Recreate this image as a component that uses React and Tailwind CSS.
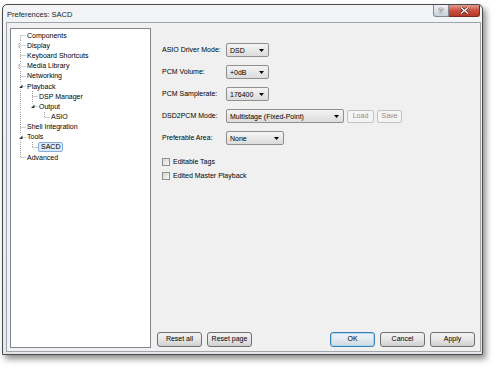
import React from "react";

const treeRows = [
  { label: "Components", level: 0, first: true },
  { label: "Display", level: 0, exp: "closed" },
  { label: "Keyboard Shortcuts", level: 0 },
  { label: "Media Library", level: 0, exp: "closed" },
  { label: "Networking", level: 0 },
  { label: "Playback", level: 0, exp: "open" },
  { label: "DSP Manager", level: 1, cont: [true] },
  { label: "Output", level: 1, cont: [true], exp: "open", last: true },
  { label: "ASIO", level: 2, cont: [true, false], last: true },
  { label: "Shell Integration", level: 0 },
  { label: "Tools", level: 0, exp: "open" },
  { label: "SACD", level: 1, cont: [true], last: true, selected: true },
  { label: "Advanced", level: 0, last: true },
];

const ROW_H = 10.2;
const CELL = 12;

// dotted connector lines + expander for one tree row
const TreeGutter = ({ row }) => {
  const w = CELL * (row.level + 1);
  const mid = Math.floor(ROW_H / 2) + 0.5;
  const cx = CELL * row.level + 6.5;
  const cont = row.cont || [];
  return (
    <svg width={w} height={ROW_H} className="shrink-0 block">
      {cont.map((c, i) =>
        c ? (
          <line key={i} x1={CELL * i + 6.5} y1="0" x2={CELL * i + 6.5} y2={ROW_H}
            stroke="#a0a0a0" strokeDasharray="1 1" />
        ) : null
      )}
      <line x1={cx} y1={row.first ? mid : 0} x2={cx} y2={row.last ? mid : ROW_H}
        stroke="#a0a0a0" strokeDasharray="1 1" />
      <line x1={cx} y1={mid} x2={w} y2={mid} stroke="#a0a0a0" strokeDasharray="1 1" />
      {row.exp === "closed" && (
        <g>
          <rect x={cx - 2} y={mid - 3} width="4" height="6" fill="#fff" />
          <path d={`M${cx - 1.5} ${mid - 2.5} L${cx + 1} ${mid} L${cx - 1.5} ${mid + 2.5} Z`}
            fill="#fff" stroke="#9a9a9a" strokeWidth="0.7" />
        </g>
      )}
      {row.exp === "open" && (
        <g>
          <rect x={cx - 2.5} y={mid - 3} width="5" height="6" fill="#fff" />
          <path d={`M${cx + 2} ${mid - 2} L${cx + 2} ${mid + 1.5} L${cx - 1.5} ${mid + 1.5} Z`}
            fill="#333" />
        </g>
      )}
    </svg>
  );
};

const Select = ({ value, w }) => (
  <div className={`${w} h-[14px] flex items-center justify-between rounded-[2px] border border-[#8e8f8f] bg-linear-to-b from-[#f4f4f4] to-[#dcdcdc] pl-[3px] pr-[4px]`}>
    <span className="leading-none">{value}</span>
    <svg width="5" height="3" className="block">
      <path d="M0 0 L5 0 L2.5 3 Z" fill="#000" />
    </svg>
  </div>
);

const Row = ({ label, children }) => (
  <div className="flex items-center h-[14px]">
    <div className="w-[64px]">{label}</div>
    {children}
  </div>
);

const DisabledBtn = ({ children, w }) => (
  <div className={`${w} h-[13px] flex items-center justify-center rounded-[2px] border border-[#c0c3c6] bg-[#f4f4f4] text-[#8d8d8d]`}>
    {children}
  </div>
);

const Check = ({ label }) => (
  <div className="flex items-center h-[12px]">
    <div className="w-[8px] h-[8px] border border-[#8e8f8f] bg-linear-to-br from-[#d8d8d8] to-[#f7f7f7]" />
    <span className="ml-[3px]">{label}</span>
  </div>
);

const Button = ({ children, focused }) => (
  <div
    className={`w-[45px] h-[15px] flex items-center justify-center rounded-[3px] border ${
      focused
        ? "border-[#3c7fb1] bg-linear-to-b from-[#eef4f8] via-[#e2eaf0] to-[#cfd8df] shadow-[inset_0_0_0_1px_#a8d8f0]"
        : "border-[#707070] bg-linear-to-b from-[#f2f2f2] via-[#e6e6e6] to-[#cfcfcf]"
    }`}
  >
    {children}
  </div>
);

export default function App() {
  return (
    <div className="w-[497px] h-[369px] bg-white overflow-hidden pt-[4px] pl-[2px] font-['Liberation_Sans',Arial,sans-serif] text-[7px] text-black">
      <div className="w-[481px] h-[351px] flex flex-col rounded-t-[5px] border border-[#4a4a4a] bg-linear-to-b from-[#f2f4f6] to-[#e4e8ec] shadow-[3px_4px_6px_rgba(0,0,0,0.45)]">
        {/* title bar */}
        <div className="h-[17px] flex items-start shrink-0">
          <div className="pl-[4px] pt-[4px] text-[7.5px] text-[#1e1e1e]">Preferences: SACD</div>
          <div className="ml-auto mr-[2px] flex">
            <div className="w-[16px] h-[12px] flex items-center justify-center rounded-bl-[3px] border border-t-0 border-[#7f8a94] bg-linear-to-b from-[#eef1f4] to-[#c9d1d8] text-white font-bold text-[8px] [text-shadow:0_0_1px_#222,0_0_1px_#222]">
              ?
            </div>
            <div className="w-[31px] h-[12px] flex items-center justify-center rounded-br-[3px] border border-t-0 border-l-0 border-[#7a2a20] bg-linear-to-b from-[#e59b8f] via-[#c9503f] to-[#b33a28]">
              <svg width="9" height="7" className="block">
                <path d="M1 0.5 L4.5 3.5 L8 0.5 M1 6.5 L4.5 3.5 L8 6.5" stroke="#3a1410" strokeWidth="2.6" fill="none" />
                <path d="M1 0.5 L4.5 3.5 L8 0.5 M1 6.5 L4.5 3.5 L8 6.5" stroke="#fff" strokeWidth="1.4" fill="none" />
              </svg>
            </div>
          </div>
        </div>

        {/* client area */}
        <div className="flex-1 ml-[3px] mr-[1px] mb-[2px] border border-[#9ea4aa] bg-[#f0f0f0] flex pt-[5px] pl-[3px] pr-[5px] pb-[3px]">
          {/* tree */}
          <div className="w-[141px] shrink-0 border border-[#828790] bg-white pl-[3px] pt-[1px]">
            {treeRows.map((row) => (
              <div key={row.label} className="flex items-center" style={{ height: ROW_H }}>
                <TreeGutter row={row} />
                <span
                  className={
                    row.selected
                      ? "ml-[0px] px-[2px] rounded-[2px] border border-[#84acdd] bg-[#dcebfc] leading-[8px]"
                      : "ml-[1px] leading-none"
                  }
                >
                  {row.label}
                </span>
              </div>
            ))}
          </div>

          {/* settings page */}
          <div className="flex-1 flex flex-col pl-[6px] pb-[1px]">
            <div className="flex-1 pl-[5px] pt-[15px] flex flex-col">
              <div className="flex flex-col gap-[8px]">
                <Row label="ASIO Driver Mode:">
                  <Select value="DSD" w="w-[43px]" />
                </Row>
                <Row label="PCM Volume:">
                  <Select value="+0dB" w="w-[43px]" />
                </Row>
                <Row label="PCM Samplerate:">
                  <Select value="176400" w="w-[43px]" />
                </Row>
                <Row label="DSD2PCM Mode:">
                  <Select value="Multistage (Fixed-Point)" w="w-[118px]" />
                  <div className="ml-[3px] flex gap-[3px]">
                    <DisabledBtn w="w-[27px]">Load</DisabledBtn>
                    <DisabledBtn w="w-[25px]">Save</DisabledBtn>
                  </div>
                </Row>
                <Row label="Preferable Area:">
                  <Select value="None" w="w-[58px]" />
                </Row>
              </div>
              <div className="mt-[11px] flex flex-col gap-[2px]">
                <Check label="Editable Tags" />
                <Check label="Edited Master Playback" />
              </div>
            </div>
            <div className="flex items-end justify-between">
              <div className="flex gap-[5px]">
                <Button>Reset all</Button>
                <Button>Reset page</Button>
              </div>
              <div className="flex gap-[5px]">
                <Button focused>OK</Button>
                <Button>Cancel</Button>
                <Button>Apply</Button>
              </div>
            </div>
          </div>
        </div>
      </div>
    </div>
  );
}
